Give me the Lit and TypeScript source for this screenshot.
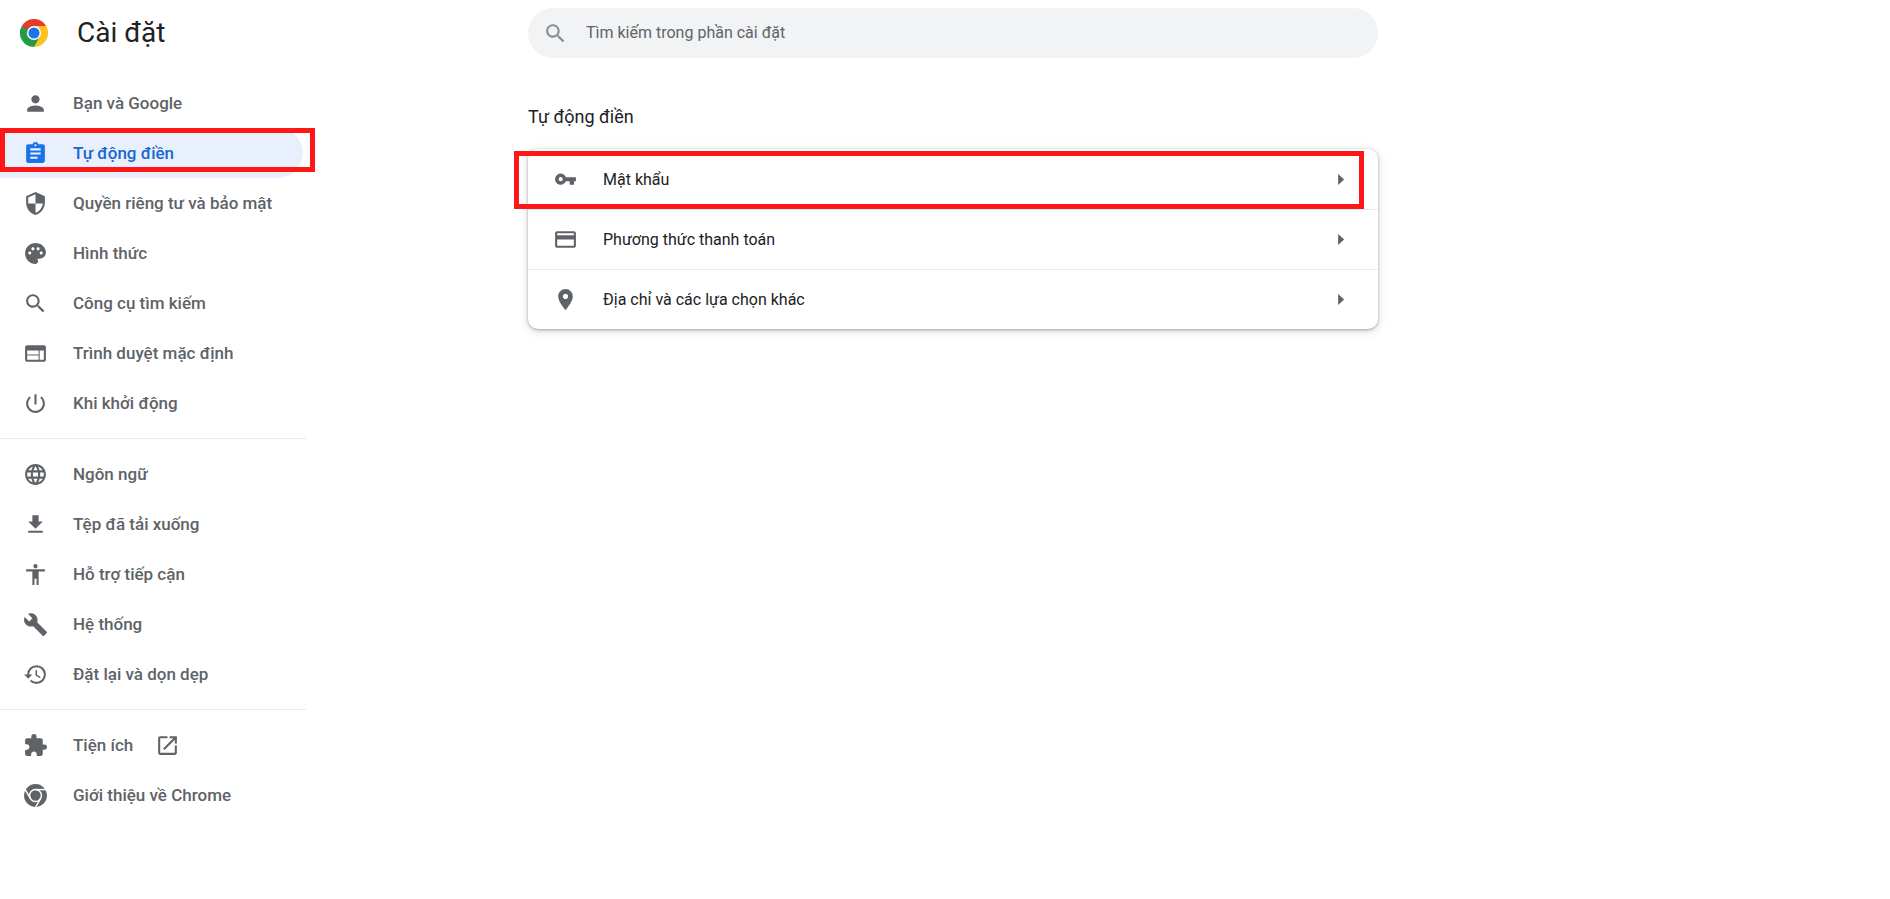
import { LitElement, html, css, svg } from "lit";
import { customElement, property, state } from "lit/decorators.js";
import { classMap } from "lit/directives/class-map.js";

const ICONS: Record<string, string> = {
  person:
    "M12 12c2.21 0 4-1.79 4-4s-1.79-4-4-4-4 1.79-4 4 1.79 4 4 4zm0 2c-2.67 0-8 1.34-8 4v2h16v-2c0-2.66-5.33-4-8-4z",
  assignment:
    "M19 3h-4.18C14.4 1.84 13.3 1 12 1c-1.3 0-2.4.84-2.82 2H5c-1.1 0-2 .9-2 2v14c0 1.1.9 2 2 2h14c1.1 0 2-.9 2-2V5c0-1.1-.9-2-2-2zm-7 0c.55 0 1 .45 1 1s-.45 1-1 1-1-.45-1-1 .45-1 1-1zm2 14H7v-2h7v2zm3-4H7v-2h10v2zm0-4H7V7h10v2z",
  security:
    "M12 1L3 5v6c0 5.55 3.84 10.74 9 12 5.16-1.26 9-6.45 9-12V5l-9-4zm0 10.99h7c-.53 4.12-3.28 7.79-7 8.94V12H5V6.3l7-3.11v8.8z",
  palette:
    "M12 2C6.49 2 2 6.49 2 12s4.49 10 10 10c1.38 0 2.5-1.12 2.5-2.5 0-.61-.23-1.2-.64-1.67-.08-.1-.13-.21-.13-.33 0-.28.22-.5.5-.5H16c3.31 0 6-2.69 6-6 0-4.96-4.49-9-10-9zm-5.5 11c-.83 0-1.5-.67-1.5-1.5S5.67 10 6.5 10s1.5.67 1.5 1.5S7.33 13 6.5 13zm3-4C8.67 9 8 8.33 8 7.500S8.670 6 9.500 6s1.500.67 1.500 1.500S10.330 9 9.500 9zm5 0c-.83 0-1.500-.67-1.500-1.500S13.670 6 14.500 6s1.500.67 1.500 1.500S15.330 9 14.500 9zm3 4c-.83 0-1.500-.67-1.500-1.500s.67-1.500 1.500-1.500 1.500.67 1.500 1.500-.67 1.500-1.500 1.500z",
  search:
    "M15.5 14h-.79l-.28-.27C15.41 12.59 16 11.11 16 9.5 16 5.91 13.09 3 9.5 3S3 5.91 3 9.5 5.91 16 9.5 16c1.61 0 3.09-.59 4.23-1.57l.27.28v.79l5 4.99L20.49 19l-4.99-5zm-6 0C7.01 14 5 11.99 5 9.500S7.010 5 9.500 5 14 7.010 14 9.500 11.990 14 9.500 14z",
  web: "M20 4H4c-1.1 0-1.99.9-1.99 2L2 18c0 1.1.9 2 2 2h16c1.1 0 2-.9 2-2V6c0-1.1-.9-2-2-2zm-5 14H4v-4h11v4zm0-5H4V9h11v4zm5 5h-4V9h4v9z",
  power:
    "M13 3h-2v10h2V3zm4.83 2.17l-1.42 1.42C17.99 7.86 19 9.81 19 12c0 3.87-3.13 7-7 7s-7-3.13-7-7c0-2.19 1.01-4.14 2.58-5.42L6.17 5.17C4.23 6.82 3 9.26 3 12c0 4.97 4.03 9 9 9s9-4.03 9-9c0-2.74-1.23-5.18-3.17-6.83z",
  language:
    "M11.99 2C6.47 2 2 6.48 2 12s4.47 10 9.99 10C17.52 22 22 17.52 22 12S17.52 2 11.99 2zm6.93 6h-2.95c-.32-1.25-.78-2.45-1.38-3.56 1.84.63 3.37 1.91 4.33 3.56zM12 4.04c.83 1.2 1.48 2.53 1.91 3.96h-3.82c.43-1.43 1.08-2.76 1.91-3.96zM4.26 14C4.1 13.36 4 12.69 4 12s.1-1.36.26-2h3.38c-.08.66-.14 1.32-.14 2s.06 1.34.14 2H4.26zm.82 2h2.95c.32 1.25.78 2.45 1.38 3.56-1.84-.63-3.37-1.9-4.33-3.56zm2.95-8H5.08c.96-1.66 2.49-2.93 4.33-3.56C8.81 5.55 8.35 6.75 8.03 8zM12 19.96c-.83-1.2-1.48-2.53-1.91-3.96h3.82c-.43 1.43-1.08 2.76-1.91 3.96zM14.34 14H9.66c-.09-.66-.16-1.32-.16-2s.07-1.35.16-2h4.68c.09.65.16 1.32.16 2s-.07 1.34-.16 2zm.25 5.56c.6-1.11 1.06-2.31 1.38-3.56h2.95c-.96 1.65-2.49 2.93-4.33 3.56zM16.36 14c.08-.66.14-1.32.14-2s-.06-1.34-.14-2h3.38c.16.64.26 1.31.26 2s-.1 1.36-.26 2h-3.38z",
  download: "M19 9h-4V3H9v6H5l7 7 7-7zM5 18v2h14v-2H5z",
  accessibility:
    "M12 2c1.1 0 2 .9 2 2s-.9 2-2 2-2-.9-2-2 .9-2 2-2zm9 7h-6v13h-2v-6h-2v6H9V9H3V7h18v2z",
  build:
    "M22.7 19l-9.1-9.1c.9-2.3.4-5-1.5-6.900-2-2-5-2.400-7.400-1.300L9 6 6 9 1.600 4.700C.4 7.100.9 10.100 2.900 12.100c1.900 1.900 4.600 2.400 6.900 1.500l9.100 9.100c.4.4 1 .4 1.400 0l2.300-2.300c.5-.4.5-1.100.1-1.400z",
  restore:
    "M13 3a9 9 0 0 0-9 9H1l3.89 3.89.07.14L9 12H6c0-3.87 3.13-7 7-7s7 3.13 7 7-3.13 7-7 7c-1.93 0-3.68-.79-4.94-2.06l-1.42 1.42A8.954 8.954 0 0 0 13 21a9 9 0 0 0 0-18zm-1 5v5l4.28 2.54.72-1.21-3.5-2.08V8H12z",
  extension:
    "M20.5 11H19V7c0-1.1-.9-2-2-2h-4V3.500a2.500 2.500 0 0 0-5 0V5H4c-1.100 0-1.990.9-1.990 2v3.800H3.500c1.490 0 2.700 1.210 2.700 2.700s-1.210 2.700-2.700 2.700H2V20c0 1.100.9 2 2 2h3.800v-1.500c0-1.490 1.210-2.700 2.700-2.700s2.700 1.210 2.700 2.700V22H17c1.100 0 2-.9 2-2v-4h1.500a2.500 2.500 0 0 0 0-5z",
  open: "M19 19H5V5h7V3H5c-1.11 0-2 .9-2 2v14c0 1.1.89 2 2 2h14c1.1 0 2-.9 2-2v-7h-2v7zM14 3v2h3.590l-9.830 9.830 1.410 1.410L19 6.410V10h2V3h-7z",
  key: "M12.400 9.800A5.400 5.400 0 1 0 12.400 13.600H16V17h4.200v-3.400H22V9.800H12.400zM7.400 13.700a2 2 0 1 1 0-4 2 2 0 0 1 0 4z",
  card: "M20 4H4c-1.11 0-1.99.89-1.99 2L2 18c0 1.11.89 2 2 2h16c1.11 0 2-.89 2-2V6c0-1.11-.89-2-2-2zm0 14H4v-6h16v6zm0-10H4V6h16v2z",
  place:
    "M12 2C8.130 2 5 5.130 5 9c0 5.250 7 13 7 13s7-7.750 7-13c0-3.870-3.130-7-7-7zm0 9.500c-1.380 0-2.500-1.120-2.500-2.500s1.120-2.500 2.500-2.500 2.500 1.120 2.500 2.500-1.120 2.500-2.500 2.500z",
  arrow: "M9.700 6.700L15.500 12l-5.800 5.300z",
};

@customElement("settings-icon")
export class SettingsIcon extends LitElement {
  @property() name = "";

  static styles = css`
    :host {
      display: block;
      flex: none;
      width: 25px;
      height: 25px;
    }
    .glyph {
      display: block;
      width: 100%;
      height: 100%;
      fill: currentColor;
    }
  `;

  render() {
    const shape =
      this.name === "chrome"
        ? svg`<circle cx="12" cy="12" r="11" />
            <circle cx="12" cy="12" r="5.700" stroke="#fff" stroke-width="1.400" />
            <g stroke="#fff" stroke-width="1.400">
              <path d="M12 6.300H23" />
              <path d="M12 6.300H23" transform="rotate(120 12 12)" />
              <path d="M12 6.300H23" transform="rotate(240 12 12)" />
            </g>`
        : svg`<path d=${ICONS[this.name]} />`;
    return html`<svg class="glyph" viewBox="0 0 24 24" aria-hidden="true">${shape}</svg>`;
  }
}

interface Item {
  id: string;
  icon: string;
  label: string;
  external?: boolean;
}

const GROUPS: Item[][] = [
  [
    { id: "people", icon: "person", label: "Bạn và Google" },
    { id: "autofill", icon: "assignment", label: "Tự động điền" },
    { id: "privacy", icon: "security", label: "Quyền riêng tư và bảo mật" },
    { id: "appearance", icon: "palette", label: "Hình thức" },
    { id: "search", icon: "search", label: "Công cụ tìm kiếm" },
    { id: "defaultBrowser", icon: "web", label: "Trình duyệt mặc định" },
    { id: "onStartup", icon: "power", label: "Khi khởi động" },
  ],
  [
    { id: "languages", icon: "language", label: "Ngôn ngữ" },
    { id: "downloads", icon: "download", label: "Tệp đã tải xuống" },
    { id: "accessibility", icon: "accessibility", label: "Hỗ trợ tiếp cận" },
    { id: "system", icon: "build", label: "Hệ thống" },
    { id: "reset", icon: "restore", label: "Đặt lại và dọn dẹp" },
  ],
  [
    { id: "extensions", icon: "extension", label: "Tiện ích", external: true },
    { id: "help", icon: "chrome", label: "Giới thiệu về Chrome" },
  ],
];

const ROWS: Item[] = [
  { id: "passwords", icon: "key", label: "Mật khẩu" },
  { id: "payments", icon: "card", label: "Phương thức thanh toán" },
  { id: "addresses", icon: "place", label: "Địa chỉ và các lựa chọn khác" },
];

@customElement("app-root")
export class AppRoot extends LitElement {
  @state() private current = "autofill";

  static styles = css`
    :host {
      display: grid;
      grid-template-columns: minmax(320px, 33fr) minmax(0, 850px) minmax(0, 32fr);
      min-height: 100vh;
      background: #fff;
      color: #202124;
      font-family: Roboto, "Noto Sans", sans-serif;
      font-size: 16px;
      line-height: 24px;
    }
    .brand {
      display: flex;
      align-items: center;
      gap: 29px;
      height: 66px;
      padding-left: 20px;
    }
    .logo {
      width: 28px;
      height: 28px;
    }
    .title {
      margin: 0;
      font-size: 28px;
      line-height: 36px;
      font-weight: 400;
    }
    .menu {
      width: 306px;
      padding-top: 12px;
    }
    .group + .group {
      margin-top: 10px;
      border-top: 1px solid #e8eaed;
      padding-top: 10px;
    }
    .item {
      position: relative;
      display: flex;
      align-items: center;
      height: 50px;
      margin-right: 3px;
      padding-left: 23px;
      border-radius: 0 25px 25px 0;
      color: #5f6368;
      font-size: 17px;
      font-weight: 500;
      text-decoration: none;
      white-space: nowrap;
    }
    .item .label {
      margin: 0 22px 0 25px;
    }
    .item.selected {
      background: #e8f0fe;
      color: #1967d2;
    }
    .item.selected settings-icon {
      color: #1a73e8;
    }
    .marker {
      position: absolute;
      box-sizing: border-box;
      border: 5px solid #ff1616;
      pointer-events: none;
    }
    .marker.nav {
      inset: 0 -12px 6px 0;
    }
    .marker.row-box {
      inset: 1px 14px 0 -14px;
    }
    .content {
      padding-top: 8px;
    }
    .search {
      display: flex;
      align-items: center;
      height: 50px;
      padding: 0 15px;
      border-radius: 25px;
      background: #f1f3f4;
      color: #5f6368;
    }
    .search settings-icon {
      opacity: 0.7;
    }
    .field {
      flex: 1;
      min-width: 0;
      margin-left: 18px;
      padding: 0;
      border: 0;
      outline: 0;
      background: none;
      color: #202124;
      font: inherit;
    }
    .field::placeholder {
      color: #5f6368;
      opacity: 1;
    }
    .heading {
      margin: 46px 0 19px;
      font-size: 18px;
      line-height: 26px;
      font-weight: 400;
    }
    .card {
      border-radius: 10px;
      box-shadow: 0 1px 3px rgba(60, 64, 67, 0.4), 0 2px 8px 1px rgba(60, 64, 67, 0.15);
    }
    .row {
      position: relative;
      display: flex;
      align-items: center;
      box-sizing: border-box;
      width: 100%;
      height: 60px;
      padding: 0 25px;
      border: 0;
      border-top: 1px solid transparent;
      background: none;
      color: inherit;
      font: inherit;
      text-align: left;
    }
    .row + .row {
      border-top-color: #e8eaed;
    }
    .row settings-icon {
      color: #5f6368;
    }
    .row .label {
      flex: 1;
      margin-left: 25px;
    }
  `;

  private renderItem(item: Item) {
    const selected = item.id === this.current;
    return html`<a
      class=${classMap({ item: true, selected })}
      href="#${item.id}"
      @click=${() => (this.current = item.id)}
    >
      <settings-icon name=${item.icon}></settings-icon>
      <span class="label">${item.label}</span>
      ${item.external ? html`<settings-icon name="open"></settings-icon>` : null}
      ${item.id === "autofill" ? html`<span class="marker nav"></span>` : null}
    </a>`;
  }

  private renderRow(item: Item) {
    return html`<button class="row" type="button">
      <settings-icon name=${item.icon}></settings-icon>
      <span class="label">${item.label}</span>
      <settings-icon name="arrow"></settings-icon>
      ${item.id === "passwords" ? html`<span class="marker row-box"></span>` : null}
    </button>`;
  }

  render() {
    return html`
      <aside>
        <div class="brand">
          <svg class="logo" viewBox="0 0 48 48" aria-hidden="true">
            <path fill="#e33b2e" d="M24 24 3.200 12A24 24 0 0 1 44.800 12z" />
            <path fill="#fcc31e" d="M24 24V12h20.800A24 24 0 0 1 24 48l10.400-18z" />
            <path fill="#249a41" d="M24 24l10.400 6L24 48A24 24 0 0 1 3.200 12l10.400 18z" />
            <path fill="#e33b2e" d="M3.200 12 24 12v12H10.130z" />
            <path fill="#249a41" d="M3.200 12l10.400 18L24 24z" />
            <circle cx="24" cy="24" r="12" fill="#fff" />
            <circle cx="24" cy="24" r="9.500" fill="#1a73e8" />
          </svg>
          <h1 class="title">Cài đặt</h1>
        </div>
        <nav class="menu" aria-label="Cài đặt">
          ${GROUPS.map((group) => html`<div class="group">${group.map((i) => this.renderItem(i))}</div>`)}
        </nav>
      </aside>
      <main class="content">
        <label class="search">
          <settings-icon name="search"></settings-icon>
          <input class="field" type="text" aria-label="Tìm kiếm trong phần cài đặt" placeholder="Tìm kiếm trong phần cài đặt" />
        </label>
        <h2 class="heading">Tự động điền</h2>
        <div class="card">${ROWS.map((row) => this.renderRow(row))}</div>
      </main>
    `;
  }
}
